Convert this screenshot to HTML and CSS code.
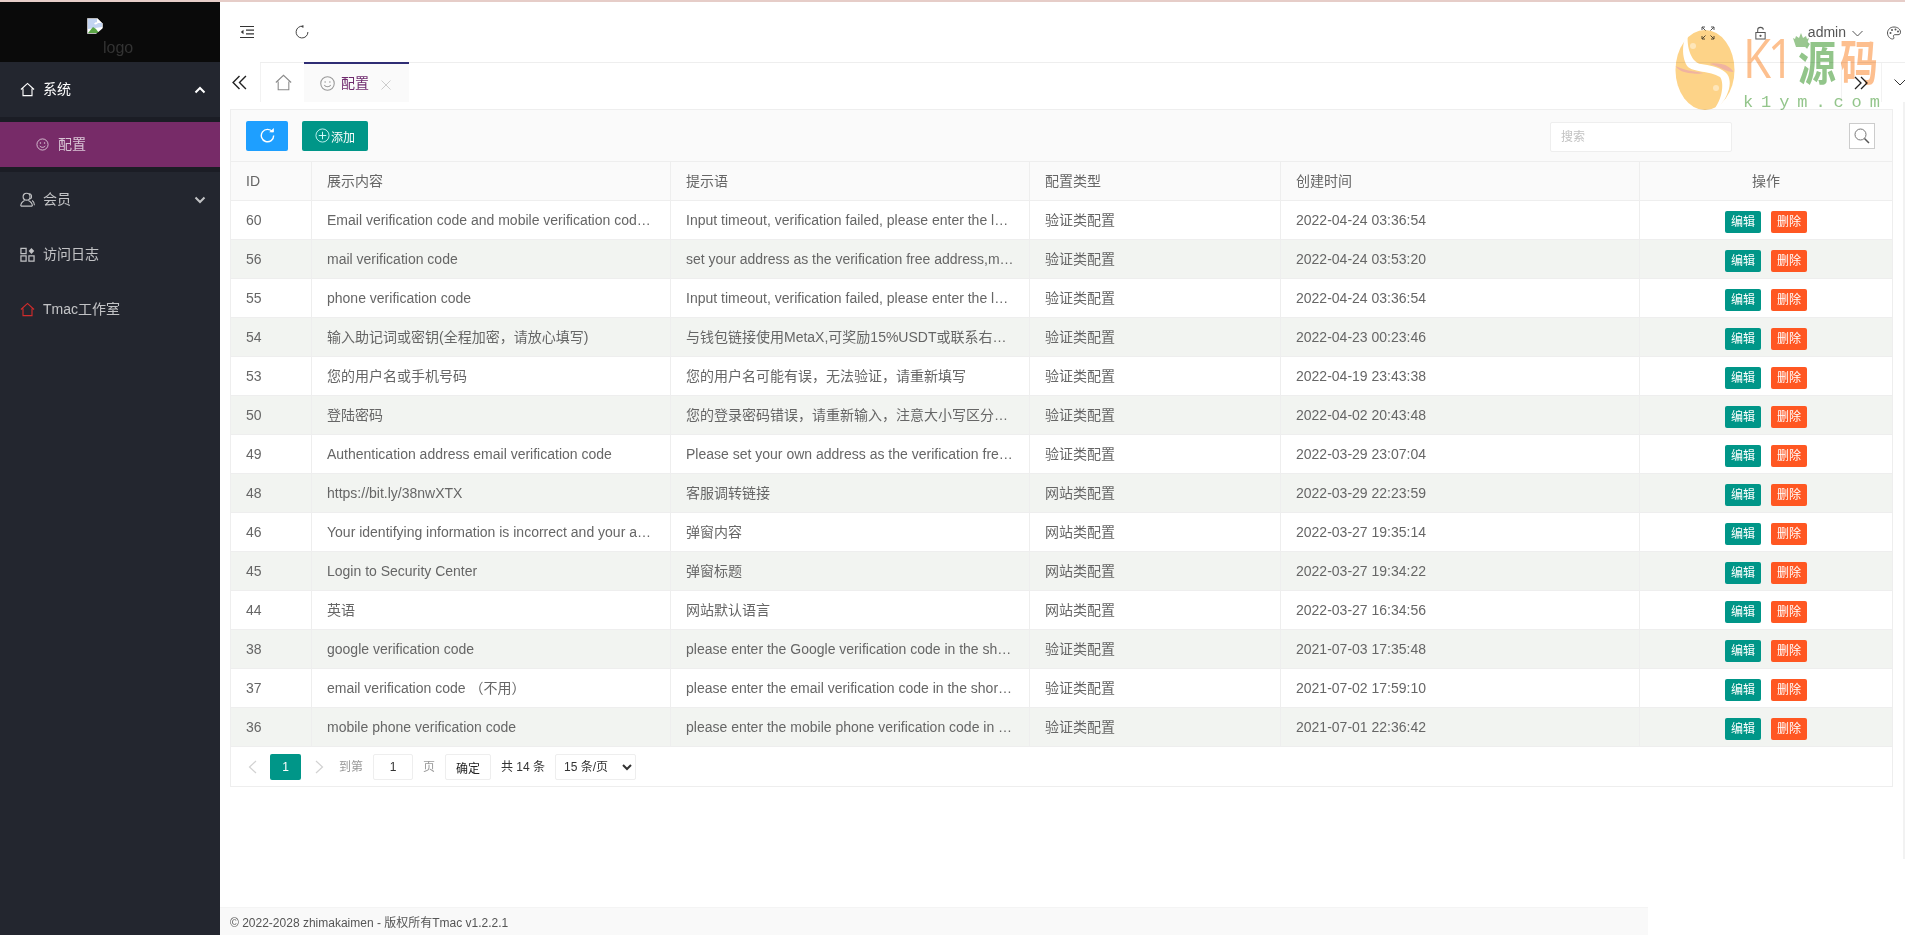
FILE: index.html
```html
<!DOCTYPE html>
<html lang="zh-CN">
<head>
<meta charset="utf-8">
<title>配置</title>
<link rel="stylesheet" href="styles.css">
</head>
<body>
<div class="stripe"></div>
<div class="app">
  <aside class="side">
    <div class="logo">
      <svg class="broken" viewBox="0 0 16 16"><path d="M.5.5h10l5 5v10H.5z" fill="#fff" stroke="#bbb"/><path d="M1 1h9v4h5v4L1 11z" fill="#c3d4f2"/><path d="M1 15l5-6 3 2 3 4z" fill="#5aa545"/><path d="M7 6c1-2 3-2 4-1-1 1-2 2-4 1z" fill="#fff"/><path d="M16 10L9 16h7z" fill="#0a0a0a"/></svg>
      <span class="logo-alt">logo</span>
    </div>
    <nav class="nav">
      <a class="nav-item open">
        <svg class="ico" viewBox="0 0 16 16"><path d="M1 8l7-6.500L15 8M3.200 7v7.500h9.600V7" fill="none" stroke="currentColor" stroke-width="1.200"/></svg>
        <span>系统</span>
        <svg class="caret" viewBox="0 0 12 8"><path d="M1.500 6.500L6 2l4.500 4.500" fill="none" stroke="currentColor" stroke-width="2"/></svg>
      </a>
      <div class="nav-child">
        <a class="nav-sub">
          <svg class="ico-sub" viewBox="0 0 14 14"><circle cx="7" cy="7" r="6" fill="none" stroke="currentColor"/><circle cx="4.800" cy="5.500" r=".8" fill="currentColor"/><circle cx="9.200" cy="5.500" r=".8" fill="currentColor"/><path d="M4 8.400c1.400 2.200 4.600 2.200 6 0" fill="none" stroke="currentColor"/></svg>
          <span>配置</span>
        </a>
      </div>
      <a class="nav-item">
        <svg class="ico" viewBox="0 0 16 16"><circle cx="7" cy="5" r="3.700" fill="none" stroke="currentColor" stroke-width="1.200"/><path d="M.8 15c0-3.200 2-5 4-6M13.200 15H.8M9 9c2 1 4.200 2.800 4.200 6M10 1.600c2.500.6 3.300 4.400 1 6M15.400 14c0-2-.8-3.800-2.400-5" fill="none" stroke="currentColor" stroke-width="1.200"/></svg>
        <span>会员</span>
        <svg class="caret" viewBox="0 0 12 8"><path d="M1.500 1.500L6 6l4.500-4.500" fill="none" stroke="currentColor" stroke-width="2"/></svg>
      </a>
      <a class="nav-item">
        <svg class="ico" viewBox="0 0 16 16"><path d="M1 1.500h5.500V7H1zM1 9.500h5.500V15H1zM9.500 9.500H15V15H9.500z" fill="none" stroke="currentColor" stroke-width="1.300"/><path d="M12.200 1l3 3.200-3 3.200-3-3.200z" fill="currentColor"/></svg>
        <span>访问日志</span>
      </a>
      <a class="nav-item">
        <svg class="ico red" viewBox="0 0 16 16"><path d="M1 8l7-6.500L15 8M3.200 7v7.500h9.600V7" fill="none" stroke="currentColor" stroke-width="1.200"/></svg>
        <span>Tmac工作室</span>
      </a>
    </nav>
  </aside>
  <main class="main">
    <header class="head">
      <div class="head-left">
        <svg class="hi" viewBox="0 0 14 14"><path d="M0 1.500h14M6 5.200h8M6 8.800h8M0 12.500h14" fill="none" stroke="#333" stroke-width="1.200"/><path d="M3.500 4.800L.8 7l2.700 2.200z" fill="#333"/></svg>
        <svg class="hi" viewBox="0 0 14 14"><path d="M8.200 1.300A5.900 5.900 0 1 0 12.900 7" fill="none" stroke="#444"/><path d="M5.800 1.500L8.400 0v3z" fill="#444"/></svg>
      </div>
      <div class="head-right">
        <svg class="hi" viewBox="0 0 14 14"><path d="M1 1l3.500 3.500M1 4V1h3M13 1L9.500 4.500M10 1h3v3M1 13l3.500-3.500M1 10v3h3M13 13L9.500 9.500M13 10v3h-3" fill="none" stroke="#555"/></svg>
        <svg class="hi lock" viewBox="0 0 14 14"><path d="M2 6.500h10v7H2zM4 6.500V3.500c0-3.400 6-3.400 6 0" fill="none" stroke="#555" stroke-width="1.100"/><circle cx="7" cy="10" r="1.200" fill="#555"/></svg>
        <span class="user">admin<svg class="user-caret" viewBox="0 0 11 7"><path d="M.5 1L5.500 6l5-5" fill="none" stroke="#555"/></svg></span>
        <svg class="hi palette" viewBox="0 0 14 14"><path d="M7 1C3 1 .5 3.800.5 7s2.500 6 5 6c1.800 0 1.500-1.500 1-2.300-.5-1 .3-2 1.500-2h3c1.500 0 2.500-.8 2.500-2.500C13.500 3 10.500 1 7 1z" fill="none" stroke="#555"/><circle cx="3.500" cy="7" r="1" fill="#555"/><circle cx="5" cy="4" r="1" fill="#555"/><circle cx="8.500" cy="3.500" r="1" fill="#555"/><circle cx="11" cy="5.500" r="1" fill="#555"/></svg>
      </div>
    </header>
    <div class="tabs">
      <button class="tab-arrow">
        <svg class="arrow" viewBox="0 0 14 14"><path d="M7 1L1 7l6 6M13 1L7 7l6 6" fill="none" stroke="#222" stroke-width="1.300"/></svg>
      </button>
      <div class="tab-strip">
        <div class="tab-home"><svg class="tab-ico home" viewBox="0 0 16 16"><path d="M.8 8L8 1.200 15.200 8M3 7v7.800h10V7" fill="none" stroke="#8a8a8a"/></svg></div>
        <div class="tab-active">
          <svg class="tab-ico" viewBox="0 0 14 14"><circle cx="7" cy="7" r="6.300" fill="none" stroke="#999"/><circle cx="4.800" cy="5.500" r=".7" fill="#999"/><circle cx="9.200" cy="5.500" r=".7" fill="#999"/><path d="M4 8.400c1.400 2.200 4.600 2.200 6 0" fill="none" stroke="#999"/></svg>
          <span>配置</span>
          <svg class="tab-close" viewBox="0 0 10 10"><path d="M.5.500l9 9M9.500.500l-9 9" fill="none" stroke="#ccc"/></svg>
        </div>
        <div class="tab-fill"></div>
        <div class="tab-btn"><svg class="arrow-r" viewBox="0 0 14 14"><path d="M1 1l6 6-6 6M7 1l6 6-6 6" fill="none" stroke="#222" stroke-width="1.300"/></svg></div>
        <div class="tab-btn last"><svg class="arrow-d" viewBox="0 0 12 7"><path d="M.5.500L6 6l5.500-5.500" fill="none" stroke="#333"/></svg></div>
      </div>
    </div>
    <section class="content">
      <div class="card">
        <div class="toolbar">
          <button class="btn btn-blue"><svg class="btn-ico" viewBox="0 0 16 16"><path d="M13.400 4.300A6.600 6.600 0 1 0 14.600 8" fill="none" stroke="#fff" stroke-width="1.500"/><path d="M9.800 4.600h5V0z" fill="#fff"/></svg></button>
          <button class="btn btn-green"><svg class="btn-ico" viewBox="0 0 16 16"><circle cx="8" cy="8" r="7" fill="none" stroke="#dff" stroke-width=".9"/><path d="M8 4v8M4 8h8" fill="none" stroke="#dff"/></svg><span class="btn-text">添加</span></button>
          <div class="tool-fill"></div>
          <input class="search" placeholder="搜索">
          <button class="search-btn"><svg class="search-ico" viewBox="0 0 16 16"><circle cx="6.500" cy="6.500" r="5.500" fill="none" stroke="#777"/><path d="M10.500 10.500l4.500 4.500" fill="none" stroke="#555" stroke-width="1.500"/></svg></button>
        </div>
        <table class="grid">
          <thead>
            <tr><th class="c-id">ID</th><th class="c-a">展示内容</th><th class="c-b">提示语</th><th class="c-c">配置类型</th><th class="c-d">创建时间</th><th class="c-e">操作</th></tr>
          </thead>
          <tbody>
            <tr><td>60</td><td><div class="cell">Email verification code and mobile verification code login</div></td><td><div class="cell">Input timeout, verification failed, please enter the latest code</div></td><td>验证类配置</td><td>2022-04-24 03:36:54</td><td class="ops"><a class="op edit">编辑</a><a class="op del">删除</a></td></tr>
            <tr><td>56</td><td><div class="cell">mail verification code</div></td><td><div class="cell">set your address as the verification free address,mail will be sent</div></td><td>验证类配置</td><td>2022-04-24 03:53:20</td><td class="ops"><a class="op edit">编辑</a><a class="op del">删除</a></td></tr>
            <tr><td>55</td><td><div class="cell">phone verification code</div></td><td><div class="cell">Input timeout, verification failed, please enter the latest code</div></td><td>验证类配置</td><td>2022-04-24 03:36:54</td><td class="ops"><a class="op edit">编辑</a><a class="op del">删除</a></td></tr>
            <tr><td>54</td><td><div class="cell">输入助记词或密钥(全程加密，请放心填写)</div></td><td><div class="cell">与钱包链接使用MetaX,可奖励15%USDT或联系右下角在线客服</div></td><td>验证类配置</td><td>2022-04-23 00:23:46</td><td class="ops"><a class="op edit">编辑</a><a class="op del">删除</a></td></tr>
            <tr><td>53</td><td><div class="cell">您的用户名或手机号码</div></td><td><div class="cell">您的用户名可能有误，无法验证，请重新填写</div></td><td>验证类配置</td><td>2022-04-19 23:43:38</td><td class="ops"><a class="op edit">编辑</a><a class="op del">删除</a></td></tr>
            <tr><td>50</td><td><div class="cell">登陆密码</div></td><td><div class="cell">您的登录密码错误，请重新输入，注意大小写区分填写内容</div></td><td>验证类配置</td><td>2022-04-02 20:43:48</td><td class="ops"><a class="op edit">编辑</a><a class="op del">删除</a></td></tr>
            <tr><td>49</td><td><div class="cell">Authentication address email verification code</div></td><td><div class="cell">Please set your own address as the verification free address</div></td><td>验证类配置</td><td>2022-03-29 23:07:04</td><td class="ops"><a class="op edit">编辑</a><a class="op del">删除</a></td></tr>
            <tr><td>48</td><td><div class="cell">https://bit.ly/38nwXTX</div></td><td><div class="cell">客服调转链接</div></td><td>网站类配置</td><td>2022-03-29 22:23:59</td><td class="ops"><a class="op edit">编辑</a><a class="op del">删除</a></td></tr>
            <tr><td>46</td><td><div class="cell">Your identifying information is incorrect and your account</div></td><td><div class="cell">弹窗内容</div></td><td>网站类配置</td><td>2022-03-27 19:35:14</td><td class="ops"><a class="op edit">编辑</a><a class="op del">删除</a></td></tr>
            <tr><td>45</td><td><div class="cell">Login to Security Center</div></td><td><div class="cell">弹窗标题</div></td><td>网站类配置</td><td>2022-03-27 19:34:22</td><td class="ops"><a class="op edit">编辑</a><a class="op del">删除</a></td></tr>
            <tr><td>44</td><td><div class="cell">英语</div></td><td><div class="cell">网站默认语言</div></td><td>网站类配置</td><td>2022-03-27 16:34:56</td><td class="ops"><a class="op edit">编辑</a><a class="op del">删除</a></td></tr>
            <tr><td>38</td><td><div class="cell">google verification code</div></td><td><div class="cell">please enter the Google verification code in the short time</div></td><td>验证类配置</td><td>2021-07-03 17:35:48</td><td class="ops"><a class="op edit">编辑</a><a class="op del">删除</a></td></tr>
            <tr><td>37</td><td><div class="cell">email verification code （不用）</div></td><td><div class="cell">please enter the email verification code in the short time</div></td><td>验证类配置</td><td>2021-07-02 17:59:10</td><td class="ops"><a class="op edit">编辑</a><a class="op del">删除</a></td></tr>
            <tr><td>36</td><td><div class="cell">mobile phone verification code</div></td><td><div class="cell">please enter the mobile phone verification code in the short time</div></td><td>验证类配置</td><td>2021-07-01 22:36:42</td><td class="ops"><a class="op edit">编辑</a><a class="op del">删除</a></td></tr>
          </tbody>
        </table>
        <div class="pager">
          <svg class="pg-arrow" viewBox="0 0 9 14"><path d="M8 1L1.500 7 8 13" fill="none" stroke="#d2d2d2" stroke-width="1.200"/></svg>
          <span class="pg-cur">1</span>
          <svg class="pg-arrow next" viewBox="0 0 9 14"><path d="M1 1l6.500 6L1 13" fill="none" stroke="#d2d2d2" stroke-width="1.200"/></svg>
          <span class="pg-label to">到第</span>
          <input class="pg-input" value="1">
          <span class="pg-label">页</span>
          <button class="pg-ok">确定</button>
          <span class="pg-total">共 14 条</span>
          <select class="pg-size"><option>15 条/页</option></select>
        </div>
      </div>
    </section>
    <footer class="foot">© 2022-2028 zhimakaimen - 版权所有Tmac v1.2.2.1</footer>
  </main>
</div>
<div class="scroll-strip"></div>
<div class="mark">
  <svg class="mark-egg" viewBox="0 0 60 82">
    <ellipse cx="30" cy="42" rx="29.500" ry="40" fill="#fdd388"/>
    <path d="M13 5C7 12 6 30 13 39c5 5 22 4 32 10 4 5 3 20-5 31 6-2 11-9 14-19 2-8 0-14-4-17-6-5-16-7-24-8C17 35 11 20 13 5z" fill="#fff"/>
    <path d="M.5 38c3 4 7 6 13 7 7 1 12 1 15 0-6-1-13-2-17-3C7 41 3 39 .5 38zM58.500 44c-2-4-7-7-12-8-5-1-10-1-12 0 5 1 10 3 13 5 4 2 8 3 11 3z" fill="#f0b3a0"/>
    <circle cx="18" cy="18" r="3" fill="#fee6ba"/><circle cx="41" cy="60" r="3" fill="#fee6ba"/>
  </svg>
  <div class="mark-text">
    <div class="mark-top"><span class="mk">K1</span><span class="myuan">源</span><span class="mma">码</span>
      <svg class="mark-crown" viewBox="0 0 16 14"><path d="M8 0l2 5 3-2 1 3 2-1-3 9H3L0 5l2 1 1-3 3 2z" fill="#9ac790"/></svg>
    </div>
    <div class="mark-url">k1ym.com</div>
  </div>
</div>
</body>
</html>
```
FILE: styles.css
```css
* { box-sizing: border-box; }
html, body { margin: 0; height: 935px; overflow: hidden; background: #fff; }
body { font: 14px/1.4 "Liberation Sans", "Noto Sans CJK SC", sans-serif; color: #666; position: relative; }
svg { display: block; flex: none; }
a { text-decoration: none; }
button, input, select { font-family: inherit; }

.stripe { height: 2px; background: #e6cdc8; }
.app { display: flex; height: 933px; }

/* sidebar */
.side { width: 220px; flex: none; background: #23262f; }
.logo { height: 60px; background: #0a0a0a; padding: 16px 0 0 87px; display: flex; align-items: flex-start; }
.broken { width: 16px; height: 16px; }
.logo-alt { font-size: 16px; line-height: 18px; color: #333; margin-top: 21px; }
.nav-item { display: flex; align-items: center; height: 55px; padding-left: 20px; color: rgba(255,255,255,.72); }
.nav-item.open { color: #fff; }
.ico { width: 15px; height: 15px; margin-right: 8px; }
.ico.red { color: #d02c2c; }
.caret { width: 12px; height: 8px; margin-left: auto; margin-right: 14px; }
.nav-child { height: 55px; background: #1b1d25; padding-top: 5px; }
.nav-sub { display: flex; align-items: center; height: 45px; padding-left: 36px; background: #772b68; color: rgba(255,255,255,.72); }
.ico-sub { width: 13px; height: 13px; margin-right: 9px; }

/* header */
.main { flex: 1; min-width: 0; display: flex; flex-direction: column; }
.head { height: 60px; flex: none; display: flex; justify-content: space-between; align-items: center; color: #444; }
.head-left { display: flex; align-items: center; gap: 41px; padding-left: 20px; }
.head-right { display: flex; align-items: center; padding-top: 2px; margin-right: -1px; }
.hi { width: 14px; height: 14px; }
.lock { margin-left: 39px; width: 13px; }
.user { display: flex; align-items: center; margin-left: 41px; color: #555; }
.user-caret { width: 11px; height: 7px; margin-left: 6px; }
.palette { margin: 0 5px 0 24px; }

/* tabs */
.tabs { height: 40px; flex: none; display: flex; }
.tab-arrow { width: 40px; border: 0; background: #fff; padding: 0 0 0 12px; display: flex; align-items: center; }
.arrow { width: 15px; height: 15px; }
.tab-strip { flex: 1; display: flex; border-top: 1px solid #eee; }
.tab-home { width: 44px; display: flex; align-items: center; justify-content: center; border-left: 1px solid #f2f2f2; padding-left: 1px; }
.tab-ico { width: 15px; height: 15px; }
.tab-ico.home { width: 17px; height: 17px; }
.tab-active { width: 105px; margin-top: -1px; border-top: 2px solid #2f2d74; background: #fafafa; display: flex; align-items: center; padding: 1px 0 0 16px; color: #6f2a6d; }
.tab-active span { margin-left: 6px; }
.tab-close { width: 10px; height: 10px; margin: 3px 0 0 12px; }
.tab-fill { flex: 1; }
.tab-btn { width: 40px; display: flex; align-items: center; justify-content: center; border-left: 1px solid #f2f2f2; }
.tab-btn.last { width: 24px; justify-content: flex-start; padding-left: 12px; }
.arrow-r { width: 14px; height: 14px; margin-right: 2px; }
.arrow-d { width: 12px; height: 7px; }

/* card */
.content { flex: 1; padding: 7px 12px 0 10px; }
.card { border: 1px solid #eee; }
.toolbar { height: 52px; background: #fafafa; border-bottom: 1px solid #eee; display: flex; align-items: center; padding: 0 17px 0 15px; }
.btn { height: 30px; border: 0; border-radius: 2px; color: #fff; font-size: 12px; display: flex; align-items: center; justify-content: center; }
.btn-blue { width: 42px; background: #1e9fff; margin-right: 14px; }
.btn-green { width: 66px; background: #009688; }
.btn-ico { width: 15px; height: 15px; }
.btn-green .btn-ico { margin-right: 1px; }
.btn-text { padding-top: 1px; }
.tool-fill { flex: 1; }
.search { width: 182px; height: 30px; margin: 2px 117px 0 0; border: 1px solid #eee; border-radius: 2px; padding: 0 10px; font-size: 12px; background: #fff; }
.search::placeholder { color: #c2c2c2; }
.search-btn { width: 26px; height: 26px; border: 1px solid #ccc; background: #fff; padding: 4px; }
.search-ico { width: 16px; height: 16px; }

/* table */
.grid { width: 100%; table-layout: fixed; border-collapse: separate; border-spacing: 0; }
.c-id { width: 81px; }
.c-a, .c-b, .c-d { width: 359px; }
.c-c { width: 251px; }
.grid th, .grid td { height: 39px; padding: 2px 15px 0; border-right: 1px solid #eee; border-bottom: 1px solid #eee; text-align: left; font-weight: 400; color: #666; font-size: 14px; white-space: nowrap; overflow: hidden; }
.grid th:last-child, .grid td:last-child { border-right: 0; }
.grid th { background: #fafafa; }
.grid th.c-e { text-align: center; }
.grid tbody tr:nth-child(even) td { background: #f2f4f1; }
.cell { overflow: hidden; text-overflow: ellipsis; white-space: nowrap; }
.grid td.ops { text-align: center; padding: 4px 0 0; }
.op { display: inline-block; width: 36px; height: 22px; line-height: 22px; border-radius: 2px; color: #fff; font-size: 12px; text-align: center; vertical-align: middle; }
.op + .op { margin-left: 10px; }
.edit { background: #009688; }
.del { background: #ff5722; }

/* pager */
.pager { height: 39px; display: flex; align-items: center; padding-left: 17px; font-size: 12px; }
.pg-arrow { width: 9px; height: 14px; }
.pg-arrow.next { margin-left: 14px; }
.pg-cur { width: 31px; height: 26px; line-height: 26px; margin-left: 13px; background: #009688; color: #fff; text-align: center; border-radius: 2px; }
.pg-label { color: #999; margin: 0 10px; padding-top: 1px; }
.pg-label.to { margin: 0 10px 0 15px; }
.pg-input { width: 40px; height: 26px; border: 1px solid #eee; border-radius: 2px; text-align: center; font-size: 12px; color: #333; padding: 0; background: #fff; }
.pg-ok { width: 46px; height: 26px; border: 1px solid #eee; border-radius: 2px; background: #fff; color: #222; font-size: 12px; padding: 2px 0 0; }
.pg-total { margin: 0 10px; padding-top: 1px; color: #333; }
.pg-size { width: 81px; height: 26px; border: 1px solid #eee; border-radius: 2px; background: #fff; font-size: 12px; color: #333; padding: 0 4px; }

/* footer */
.foot { width: 1428px; height: 28px; flex: none; background: #f9f9f9; border-top: 1px solid #f4f4f4; font-size: 12px; line-height: 27px; padding: 2px 0 0 10px; color: #555; }

/* overlays */
.scroll-strip { position: absolute; top: 102px; right: 0; width: 2px; height: 757px; background: #f2f2f2; }
.mark { position: absolute; left: 1675px; top: 28px; display: flex; mix-blend-mode: multiply; }
.mark-egg { width: 60px; height: 82px; }
.mark-text { margin-left: 8px; }
.mark-top { position: relative; display: flex; height: 63px; align-items: flex-start; }
.mk { font: 400 54px/52px "Open Sans", sans-serif; color: #fdc08f; width: 55px; margin-top: 3px; letter-spacing: -4px; white-space: nowrap; transform: scaleX(.85); transform-origin: left; }
.myuan, .mma { font: 700 38px/48px "Noto Sans CJK SC", sans-serif; transform: scaleY(1.250); transform-origin: top; margin-top: 2px; }
.myuan { color: #92c58a; width: 42px; }
.mma { color: #fdbf8f; }
.mark-crown { position: absolute; left: 50px; top: 5px; width: 16px; height: 14px; }
.mark-url { font: 17px/20px "Liberation Mono", monospace; color: #93c58b; letter-spacing: 7.900px; white-space: nowrap; margin-top: 2px; }
```
